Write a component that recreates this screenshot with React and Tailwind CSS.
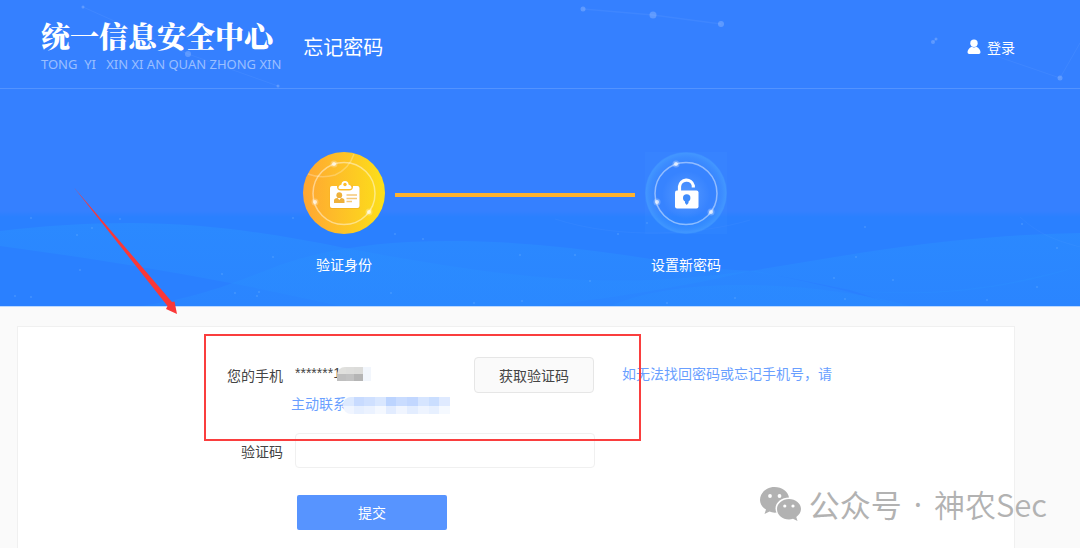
import { useState } from 'react';

const DOTS = [
    [583, 9, 2.5], [653, 15, 3.5], [721, 24, 3], [933, 42, 2], [936, 39, 1.5],
    [1060, 78, 2.5], [83, 7, 1.5], [188, 54, 3], [278, 86, 1.5],
];

const STARS = [
    [31, 218], [92, 228], [77, 235], [80, 270], [15, 296], [31, 297], [120, 219], [222, 274], [235, 293],
    [257, 296], [259, 292], [273, 257], [293, 218], [391, 293], [395, 234], [423, 239], [474, 303], [522, 301],
    [520, 255], [575, 255], [590, 281], [618, 234], [667, 303], [735, 298], [845, 299], [856, 257], [865, 227],
    [893, 280], [834, 278], [1037, 287], [1057, 248], [987, 300], [647, 223], [1022, 224],
];

const BannerArt = () => (
    <svg
        className="absolute inset-0 h-full w-full"
        viewBox="0 0 1080 306"
        preserveAspectRatio="none"
        fill="none"
        aria-hidden="true"
    >
        <defs>
            <linearGradient id="wave" x1="0" y1="223" x2="0" y2="306" gradientUnits="userSpaceOnUse">
                <stop offset="0" stopColor="#2b8eff" stopOpacity="0.65" />
                <stop offset="1" stopColor="#2b8eff" stopOpacity="0.35" />
            </linearGradient>
            <linearGradient id="sea" x1="0" y1="211" x2="0" y2="217" gradientUnits="userSpaceOnUse">
                <stop offset="0" stopColor="#2a80ff" stopOpacity="0" />
                <stop offset="1" stopColor="#2a80ff" />
            </linearGradient>
        </defs>
        <rect y="208" width="1080" height="98" fill="url(#sea)" />
        <g fill="url(#wave)">
            <path d="M0 231C40 226 85 223 130 223C210 223 280 235 345 248C410 260 480 272 540 277V306H340C230 281 120 262 0 246Z" />
            <path d="M140 306C200 298 240 280 280 265C330 247 390 241 450 241C530 241 610 251 690 266C710 269 735 270 755 271C820 284 860 294 900 306Z" />
            <path d="M540 277C620 284 680 280 750 271C850 255 940 236 1080 233V266C1010 289 930 299 850 290C810 282 780 276 750 271C690 286 600 300 540 306Z" />
            <path d="M610 306C650 289 700 285 740 285C800 285 860 293 910 306Z" />
            <path d="M850 290C950 299 1020 282 1080 266V306H900Z" />
        </g>
        <g stroke="#fff" strokeOpacity="0.05">
            <path d="M583 9L653 15L721 24" strokeWidth="1.5" />
            <path d="M933 42L936 39M1080 43L1060 78L990 54M83 7L188 54L278 86" />
            <path d="M555 219C620 240 700 235 750 220M1020 217C1040 235 1055 240 1080 247" strokeOpacity="0.03" />
        </g>
        <g fill="#fff" fillOpacity="0.2">
            {DOTS.map(([x, y, r]) => (
                <circle key={`${x}-${y}`} cx={x} cy={y} r={r} />
            ))}
        </g>
        <g fill="#9cd0ff" fillOpacity="0.22">
            {STARS.map(([x, y]) => (
                <circle key={`${x}-${y}`} cx={x} cy={y} r="1" />
            ))}
        </g>
    </svg>
);

const UserIcon = () => (
    <svg className="h-4 w-[14px]" viewBox="0 0 14 16" fill="#fff" aria-hidden="true">
        <circle cx="7" cy="4.2" r="3.7" />
        <path d="M4.7 7.7Q7 9.3 9.3 7.7C12 9 13.5 11 13.5 13.3Q13.5 15 11.8 15H2.2Q.5 15 .5 13.3C.5 11 2 9 4.7 7.7Z" />
    </svg>
);

const Orbit = () => (
    <>
        <circle cx="41" cy="41.5" r="31" fill="none" stroke="#fff" strokeOpacity="0.45" strokeWidth="1.5" />
        {[[31, 12], [12, 50], [66, 60]].map(([x, y]) => (
            <g key={x} fill="#fff">
                <circle cx={x} cy={y} r="3.5" fillOpacity="0.25" />
                <circle cx={x} cy={y} r="2" fillOpacity="0.7" />
            </g>
        ))}
    </>
);

const IdentityBadge = () => (
    <svg className="h-[82px] w-[82px]" viewBox="0 0 82 82" aria-hidden="true">
        <defs>
            <linearGradient id="gold" x1="0" y1="0" x2="1" y2="0">
                <stop offset="0" stopColor="#ffa633" />
                <stop offset="1" stopColor="#fce019" />
            </linearGradient>
        </defs>
        <circle cx="41" cy="41" r="41" fill="url(#gold)" />
        <path d="M5 22Q18 27 32 23Q46 17 51 2" fill="none" stroke="#fff" strokeOpacity="0.25" strokeWidth="1.5" />
        <Orbit />
        <rect x="26.5" y="34" width="30.5" height="23" rx="2" fill="#e0941c" fillOpacity="0.3" />
        <rect x="27" y="34" width="29.5" height="22" rx="2" fill="#fff" />
        <path d="M34 33H50V34.5Q50 38.5 46 38.5H38Q34 38.5 34 34.5Z" fill="#fdbd2a" />
        <path d="M37 37Q35 37 35.5 35Q36 33 38.5 32.5Q38.5 29 42 29T45.5 32.5Q48 33 48.5 35Q49 37 47 37Z" fill="#fff" />
        <circle cx="42" cy="32.5" r="1.7" fill="#fdbd2a" />
        <circle cx="36.3" cy="43.2" r="2.9" fill="#eeb13a" />
        <path d="M31 51V48.5Q31 46 34.5 46L36.3 48L38 46Q41.5 46 41.5 48.5V51Z" fill="#eeb13a" />
        <path d="M43.5 43H54M43.5 46.5H54M43.5 49.5H49" stroke="#f5c877" strokeWidth="1.5" />
    </svg>
);

const LockBadge = () => (
    <svg className="h-[82px] w-[82px]" viewBox="0 0 82 82" aria-hidden="true">
        <defs>
            <radialGradient id="halo">
                <stop offset="0.7" stopColor="#48a0ff" stopOpacity="0" />
                <stop offset="0.88" stopColor="#48a0ff" stopOpacity="0.35" />
                <stop offset="0.97" stopColor="#48a0ff" stopOpacity="0.65" />
                <stop offset="1" stopColor="#48a0ff" stopOpacity="0.3" />
            </radialGradient>
            <radialGradient id="glow">
                <stop offset="0" stopColor="#7ab4ff" stopOpacity="0.45" />
                <stop offset="1" stopColor="#7ab4ff" stopOpacity="0" />
            </radialGradient>
        </defs>
        <rect width="82" height="82" fill="#4f9aff" fillOpacity="0.1" />
        <circle cx="41" cy="41" r="41" fill="url(#halo)" />
        <circle cx="41" cy="43" r="24" fill="url(#glow)" />
        <Orbit />
        <path d="M34.5 40V34.5A7 7 0 0 1 48.3 33.5V35.5" fill="none" stroke="#fff" strokeWidth="3.2" />
        <rect x="30" y="38.5" width="23.5" height="18" rx="2" fill="#fff" />
        <circle cx="41.7" cy="46" r="3.7" fill="#3f8cfb" />
        <path d="M40 47H43.5V51L41.7 53L40 51Z" fill="#3f8cfb" />
    </svg>
);

const WechatIcon = () => (
    <svg className="h-[34px] w-[41px]" viewBox="0 0 41 34" aria-hidden="true">
        <g fill="#b2b2b2">
            <path d="M14.5 0C22 0 28 4.3 29 10.5C22 10.5 15.5 15 15.5 21.5Q15.5 23.5 16.5 25.5Q12.5 26 9.5 24.5L4.5 27L6 22.5C2.5 20.5 0 17 0 13C0 5.8 6.5 0 14.5 0Z" />
            <path d="M29 12C35.5 12 41 16.5 41 22C41 25.3 39 28 36.3 30L37.5 34L33 31.8Q31 32.5 29 32.5C22.5 32.5 17 28 17 22C17 16.5 22.5 12 29 12Z" />
        </g>
        <g fill="#fff">
            <circle cx="10" cy="9" r="1.9" />
            <circle cx="19.5" cy="9" r="1.9" />
            <circle cx="24.8" cy="19" r="1.6" />
            <circle cx="33" cy="19" r="1.6" />
        </g>
    </svg>
);

const Mosaic = ({ colors, className }) => (
    <span className={`absolute grid overflow-hidden ${className}`} aria-hidden="true">
        {colors.map((color, i) => (
            <span key={i} className="block" style={{ backgroundColor: color }} />
        ))}
    </span>
);

const PHONE_MASK = [
    '#e0e0dd', '#dededc', '#dcdcda', '#f2f6fc',
    '#bfbfbf', '#c2c2c2', '#b5b5b5', '#f2f6fc',
];

const CONTACT_MASK = [
    '#dce9ff', '#c8dbff', '#cfe0ff', '#d9e7ff', '#bcd4ff', '#c9dcff', '#c2d7ff', '#d6e5ff', '#cadeff', '#dfeaff',
    '#f0f5ff', '#e6efff', '#ebf2ff', '#f4f8ff', '#e2ecff', '#f0f5ff', '#e3edff', '#eef4ff', '#e7f0ff', '#f5f9ff',
];

const App = () => {
    const [code, setCode] = useState('');

    return (
        <div className="relative flex min-h-screen flex-col overflow-hidden bg-[#fafafa] font-['Noto_Sans_CJK_SC',sans-serif] text-sm text-[#444]">
            {/* Banner */}
            <div className="relative border-b border-[#bcd9ff] bg-[#3580ff] pb-8 text-white">
                <BannerArt />
                <header className="relative flex h-[89px] items-center border-b border-white/15 pt-1.5 pr-[65px] pl-[41px]">
                    <div>
                        <div className="font-['Noto_Serif_CJK_SC','Noto_Sans_CJK_SC',serif] text-[29px] leading-8 font-black">统一信息安全中心</div>
                        <div className="mt-0.5 font-['Noto_Sans',sans-serif] text-[13px] leading-5 whitespace-pre text-white/50">TONG  YI   XIN XI AN QUAN ZHONG XIN</div>
                    </div>
                    <h1 className="ml-[22px] text-xl">忘记密码</h1>
                    <a href="#login" className="ml-auto flex items-center gap-1.5">
                        <UserIcon />
                        登录
                    </a>
                </header>

                {/* Steps */}
                <ol className="relative mt-[63px] mr-[67px] ml-[17px] flex justify-center gap-2.5">
                    <li className="flex w-[82px] flex-col items-center gap-5">
                        <IdentityBadge />
                        <span>验证身份</span>
                    </li>
                    <li className="mt-[41px] h-1 w-60 bg-[#ffb22c]" aria-hidden="true" />
                    <li className="flex w-[82px] flex-col items-center gap-5">
                        <LockBadge />
                        <span>设置新密码</span>
                    </li>
                </ol>
            </div>

            {/* Form */}
            <main className="mt-[19px] mr-[65px] ml-[17px] flex-1 border border-b-0 border-[#f0f0f0] bg-white pt-[30px] pb-[18px]">
                <form onSubmit={(e) => e.preventDefault()}>
                    <div className="flex items-center">
                        <span className="w-[265px] text-right">您的手机</span>
                        <span className="relative ml-3 w-[179px] pb-1 font-['Liberation_Sans',sans-serif]">
                            *******1
                            <Mosaic colors={PHONE_MASK} className="top-1 left-[42px] h-[14px] w-[34px] grid-cols-4 rounded-tl-lg" />
                        </span>
                        <button type="button" className="h-9 w-[120px] rounded border border-[#e6e6e6] bg-[#fafafa]">
                            获取验证码
                        </button>
                        <a href="#contact" className="ml-7 pb-1 text-[#6a9fff]">如无法找回密码或忘记手机号，请</a>
                    </div>
                    <div className="ml-[273px] flex h-5 items-center">
                        <a href="#contact" className="relative text-[#6a9fff]">
                            主动联系
                            <Mosaic colors={CONTACT_MASK} className="top-1 left-[52px] h-[17px] w-[107px] grid-cols-10 rounded-l-lg" />
                        </a>
                    </div>
                    <div className="mt-5 flex items-center">
                        <label htmlFor="code" className="w-[265px] text-right">验证码</label>
                        <input
                            id="code"
                            type="text"
                            value={code}
                            onChange={(e) => setCode(e.target.value)}
                            className="ml-3 h-[35px] w-[300px] rounded-sm border border-[#f0f0f0] bg-white px-3"
                        />
                    </div>
                    <button type="submit" className="mt-[27px] ml-[279px] h-[35px] w-[150px] rounded-xs bg-[#5794ff] pb-0.5 text-white">
                        提交
                    </button>
                </form>
            </main>

            {/* Annotations */}
            <div className="pointer-events-none absolute top-[334px] left-[204px] h-[107px] w-[437px] border-2 border-[#fa3e3e]" />
            <svg className="pointer-events-none absolute top-[186px] left-[72px] h-[130px] w-[108px]" viewBox="0 0 108 130" aria-hidden="true">
                <path d="M2 1.5L100 116L102.500 115.500L105 128L94 123L95.500 120Z" fill="#fa3838" />
            </svg>
            <div className="pointer-events-none absolute right-[33px] bottom-[22px] flex items-center text-[31px] text-[#b2b2b2]">
                <WechatIcon />
                <span className="ml-2">公众号</span>
                <span className="mx-3 font-['Noto_Sans',sans-serif]">·</span>
                <span className="font-[350]">神农Sec</span>
            </div>
        </div>
    );
};

export default App;
